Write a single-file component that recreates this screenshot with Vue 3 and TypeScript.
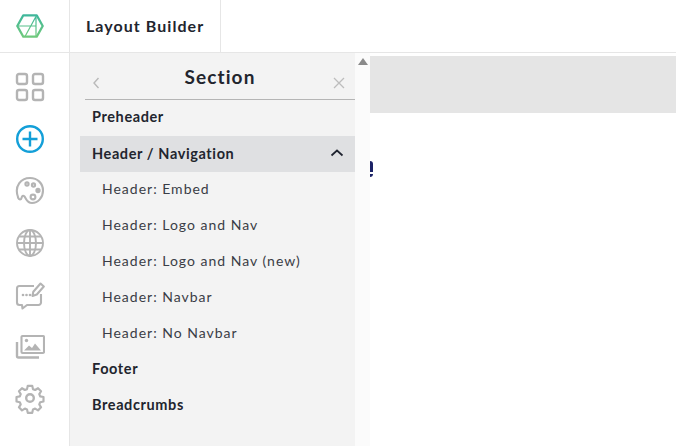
<script setup lang="ts">
const before: string[] = ['Preheader'];
const subs: string[] = ['Header: Embed', 'Header: Logo and Nav', 'Header: Logo and Nav (new)', 'Header: Navbar', 'Header: No Navbar'];
const after: string[] = ['Footer', 'Breadcrumbs'];
</script>

<template>
  <div class="app">
    <header class="top">
      <div class="logo-cell">
        <svg width="28" height="24" viewBox="0 0 28 24" fill="none" stroke="url(#logoGreen)" stroke-width="2.300" stroke-linejoin="round">
          <defs>
            <linearGradient id="logoGreen" x1="0" y1="0" x2="0" y2="1">
              <stop offset="0" stop-color="#3fb79b" />
              <stop offset="1" stop-color="#6fc97c" />
            </linearGradient>
          </defs>
          <path d="M1.300 12 7.300 1.300h13.400L26.700 12l-6 10.700H7.300z" />
          <path d="M2 12h18M20.500 1.500 9 22.500M20 1.500V22" stroke-width="1.200" />
        </svg>
      </div>
      <div class="title-cell">Layout Builder</div>
    </header>
    <div class="body">
      <nav class="rail">
        <svg width="30" height="30" viewBox="0 0 30 30" fill="none" stroke="#b4b4b4" stroke-width="2.400">
          <rect x="2" y="2" width="10" height="10" rx="2" />
          <rect x="18" y="2" width="10" height="10" rx="2" />
          <rect x="2" y="18" width="10" height="10" rx="2" />
          <rect x="18" y="18" width="10" height="10" rx="2" />
        </svg>
        <svg width="30" height="30" viewBox="0 0 30 30" fill="none" stroke="#139fd8" stroke-width="2.400">
          <circle cx="15" cy="15" r="12.800" />
          <path d="M15 7.500v15M7.500 15h15" />
        </svg>
        <svg width="30" height="30" viewBox="0 0 30 30" fill="none" stroke="#b4b4b4" stroke-width="2.100">
          <path d="M3 21C-1 10 6 2 15 2c7.500 0 13 5.500 13 12.500 0 7-5 12.500-11 12.500-5 0-5.500-4-7.500-6.500-1.500-1.500-2.500-.5-3 1.500-.5 2-2.500 2-3.500-.5z" />
          <circle cx="12" cy="8" r="1.600" />
          <circle cx="18.500" cy="9" r="1.600" />
          <circle cx="23" cy="14.500" r="1.600" fill="#b4b4b4" />
          <circle cx="18" cy="21" r="2.400" />
        </svg>
        <svg width="30" height="30" viewBox="0 0 30 30" fill="none" stroke="#b4b4b4" stroke-width="1.900">
          <circle cx="15" cy="15" r="13" />
          <ellipse cx="15" cy="15" rx="6" ry="13" />
          <path d="M15 2v26M2 15h26M4 8.500h22M4 21.500h22" />
        </svg>
        <svg width="30" height="30" viewBox="0 0 30 30" fill="none" stroke="#b4b4b4" stroke-width="2.100" stroke-linejoin="round">
          <path d="M19 6H4.500A2.500 2.500 0 0 0 2 8.500v14A2.500 2.500 0 0 0 4.500 25H7l.5 3.500 4.500-3.500h11.500a2.500 2.500 0 0 0 2.500-2.500V14" />
          <path d="m17.500 16 .8-4.300L25.500 3.500l3.300 3-7 8z" />
          <circle cx="8" cy="15" r="1.300" fill="#b4b4b4" stroke="none" />
          <circle cx="11.500" cy="15" r="1.300" fill="#b4b4b4" stroke="none" />
          <circle cx="15" cy="15" r="1.300" fill="#b4b4b4" stroke="none" />
        </svg>
        <svg width="30" height="30" viewBox="0 0 30 30" fill="none" stroke="#b4b4b4" stroke-width="2.100">
          <rect x="6.500" y="4" width="22.500" height="17" rx="1" />
          <path d="M2 10v14a1.500 1.500 0 0 0 1.500 1.500H24" stroke-width="2.400" />
          <path d="M9 18.500l5-5 3 2.500 3-4.500 6 7z" fill="#b4b4b4" stroke="none" />
          <circle cx="11.500" cy="8.500" r="1.700" fill="#b4b4b4" stroke="none" />
        </svg>
        <svg width="30" height="30" viewBox="0 0 30 30" fill="none" stroke="#b4b4b4" stroke-width="2.400" stroke-linejoin="round">
          <path d="M12.500 2h5l.8 3.700 2.400 1 3.200-2 3.400 3.400-2 3.200 1 2.400 3.700.8v5l-3.700.8-1 2.400 2 3.200-3.400 3.400-3.200-2-2.400 1-.8 3.700h-5l-.8-3.700-2.400-1-3.200 2-3.400-3.400 2-3.200-1-2.400-3.700-.8v-5l3.700-.8 1-2.400-2-3.200 3.400-3.400 3.200 2 2.400-1z" transform="translate(1.500 0) scale(.9)" />
          <circle cx="15" cy="14" r="3.800" />
        </svg>
      </nav>
      <aside class="panel">
        <div class="panel-head">
          <svg class="back" width="8" height="12" viewBox="0 0 8 12" fill="none" stroke="#b9b9b9" stroke-width="1.400"><path d="M6.500 1 2 6l4.500 5" /></svg>
          <span class="panel-title">Section</span>
          <svg class="close" width="12" height="12" viewBox="0 0 12 12" fill="none" stroke="#bdbdbd" stroke-width="1.300"><path d="m1 1 10 10M11 1 1 11" /></svg>
        </div>
        <div v-for="item in before" :key="item" class="row strong">{{ item }}</div>
        <div class="row strong open">
          <span>Header / Navigation</span>
          <svg width="14" height="8" viewBox="0 0 14 8" fill="none" stroke="#1f2430" stroke-width="1.700"><path d="m1.500 6.500 5.500-5 5.500 5" /></svg>
        </div>
        <div v-for="item in subs" :key="item" class="row sub">{{ item }}</div>
        <div v-for="item in after" :key="item" class="row strong">{{ item }}</div>
      </aside>
      <div class="scrollbar"><span class="arrow"></span></div>
      <main class="canvas">
        <div class="band"></div>
        <div class="peek"></div>
      </main>
    </div>
  </div>
</template>

<style scoped>
.app {
  width: 676px;
  height: 446px;
  overflow: hidden;
  background: #fff;
  display: flex;
  flex-direction: column;
  font-family: "Lato", "Liberation Sans", sans-serif;
  color: #22252e;
}
.top {
  height: 53px;
  flex: none;
  box-sizing: border-box;
  border-bottom: 1px solid #e6e6e6;
  display: flex;
}
.logo-cell {
  width: 70px;
  box-sizing: border-box;
  border-right: 1px solid #e6e6e6;
  display: flex;
  align-items: center;
  justify-content: center;
  padding-right: 9px;
}
.title-cell {
  width: 151px;
  box-sizing: border-box;
  border-right: 1px solid #e6e6e6;
  padding: 0 0 2px 16px;
  display: flex;
  align-items: center;
  font-size: 16px;
  font-weight: 700;
  letter-spacing: 1.050px;
}
.body {
  flex: 1;
  display: flex;
  min-height: 0;
}
.rail {
  width: 70px;
  flex: none;
  box-sizing: border-box;
  border-right: 1px solid #e6e6e6;
  padding: 19px 10px 0 0;
  display: flex;
  flex-direction: column;
  align-items: center;
  gap: 22px;
}
.panel {
  width: 285px;
  flex: none;
  background: #f3f3f3;
  box-sizing: border-box;
  padding-left: 10px;
}
.panel-head {
  height: 47px;
  margin-left: 5px;
  box-sizing: border-box;
  border-bottom: 1px solid #b5b5b5;
  display: flex;
  align-items: center;
  justify-content: center;
  position: relative;
}
.panel-title {
  font-size: 19px;
  font-weight: 700;
  letter-spacing: 1.100px;
}
.back {
  position: absolute;
  left: 7px;
  top: 24px;
}
.close {
  position: absolute;
  left: 248px;
  top: 24px;
}
.row {
  height: 36px;
  display: flex;
  align-items: center;
  box-sizing: border-box;
  padding-bottom: 3px;
}
.strong {
  padding-left: 12px;
  font-size: 14.500px;
  font-weight: 700;
  letter-spacing: 0.600px;
}
.open {
  background: #dfe0e2;
  justify-content: space-between;
  padding-right: 11px;
  padding-bottom: 2px;
}
.sub {
  padding-left: 22px;
  font-size: 14px;
  letter-spacing: 1px;
  color: #3a3d46;
}
.scrollbar {
  width: 15px;
  flex: none;
  background: #fbfbfb;
  display: flex;
  justify-content: center;
  padding-top: 5px;
  box-sizing: border-box;
}
.arrow {
  width: 0;
  height: 0;
  border-left: 5px solid transparent;
  border-right: 5px solid transparent;
  border-bottom: 7px solid #8a8a8a;
}
.canvas {
  flex: 1;
  padding-top: 3px;
  position: relative;
}
.band {
  height: 57px;
  background: #e5e5e5;
}
.peek {
  position: absolute;
  left: 0;
  top: 108px;
  width: 3px;
  height: 16px;
  border-radius: 0 3px 3px 0;
  background: linear-gradient(#1b2266 0 11px, transparent 11px 13px, #1b2266 13px);
}
</style>
